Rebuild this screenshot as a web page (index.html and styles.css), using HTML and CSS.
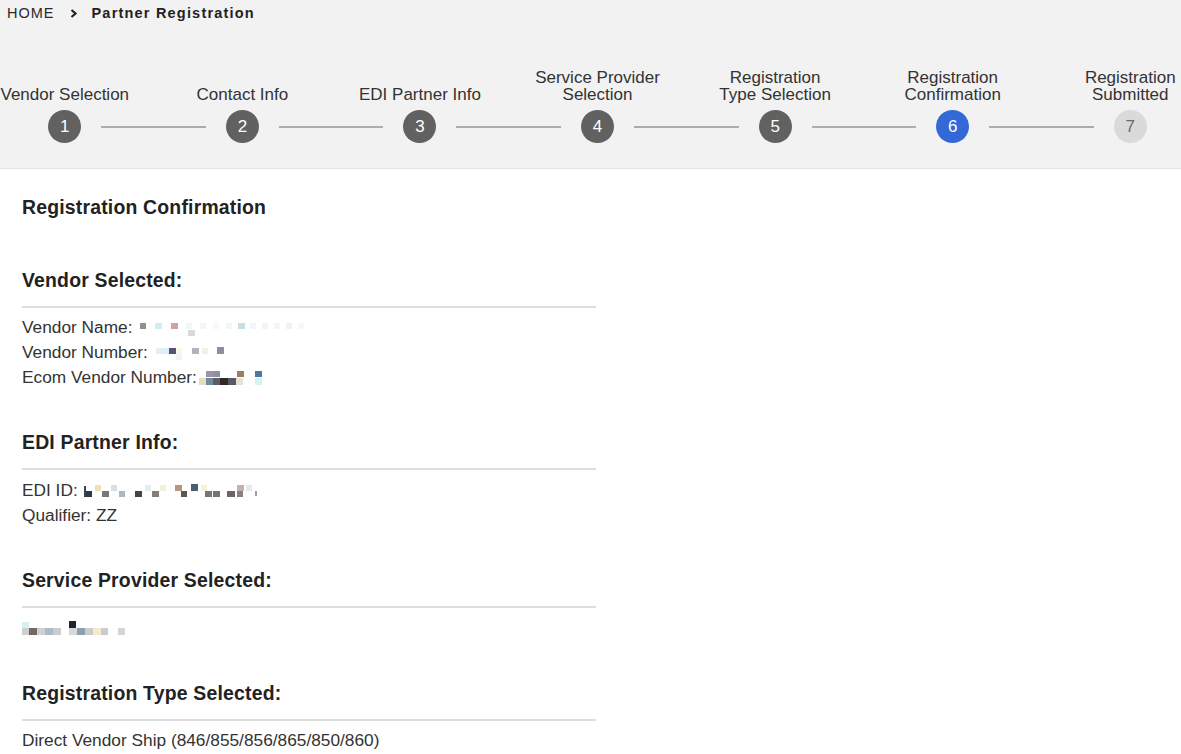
FILE: index.html
```html
<!DOCTYPE html>
<html lang="en">
<head>
<meta charset="utf-8">
<title>Partner Registration</title>
<link rel="stylesheet" href="styles.css">
</head>
<body>
<header class="top-band">
  <nav class="breadcrumb">
    <span class="crumb">HOME</span>
    <svg class="crumb-sep" width="8" height="9" viewBox="0 0 8 9"><polyline points="1.5,1 5.5,4.5 1.5,8" fill="none" stroke="#222" stroke-width="2.2"/></svg>
    <span class="crumb current">Partner Registration</span>
  </nav>
  <ol class="stepper">
    <li class="step done first">
      <span class="step-label">Vendor Selection</span>
      <span class="step-track"><span class="line"></span><span class="dot">1</span><span class="line"></span></span>
    </li>
    <li class="step done">
      <span class="step-label">Contact Info</span>
      <span class="step-track"><span class="line"></span><span class="dot">2</span><span class="line"></span></span>
    </li>
    <li class="step done">
      <span class="step-label">EDI Partner Info</span>
      <span class="step-track"><span class="line"></span><span class="dot">3</span><span class="line"></span></span>
    </li>
    <li class="step done">
      <span class="step-label">Service Provider<br>Selection</span>
      <span class="step-track"><span class="line"></span><span class="dot">4</span><span class="line"></span></span>
    </li>
    <li class="step done">
      <span class="step-label">Registration<br>Type Selection</span>
      <span class="step-track"><span class="line"></span><span class="dot">5</span><span class="line"></span></span>
    </li>
    <li class="step active">
      <span class="step-label">Registration<br>Confirmation</span>
      <span class="step-track"><span class="line"></span><span class="dot">6</span><span class="line"></span></span>
    </li>
    <li class="step todo last">
      <span class="step-label">Registration<br>Submitted</span>
      <span class="step-track"><span class="line"></span><span class="dot">7</span><span class="line"></span></span>
    </li>
  </ol>
</header>

<main class="content">
  <h2 class="page-title">Registration Confirmation</h2>

  <section class="section">
    <h3 class="section-title">Vendor Selected:</h3>
    <div class="section-body">
      <div class="row">Vendor Name: <svg class="redact" width="168" height="16" viewBox="0 0 168 16">
        <rect x="0" y="3" width="6" height="6" fill="#8f8f8f"/>
        <rect x="15" y="3" width="7" height="6" fill="#d3eef3"/>
        <rect x="31" y="3" width="7" height="6" fill="#cfa3a3"/>
        <rect x="46" y="3" width="6" height="6" fill="#eef6f8"/>
        <rect x="48" y="10" width="7" height="6" fill="#d9d9d9"/>
        <rect x="60" y="3" width="6" height="6" fill="#f2f6f8"/>
        <rect x="73" y="3" width="6" height="6" fill="#f4f8fa"/>
        <rect x="86" y="3" width="6" height="6" fill="#f1f5f7"/>
        <rect x="98" y="3" width="7" height="6" fill="#c6dfe2"/>
        <rect x="110" y="3" width="6" height="6" fill="#f0f6f8"/>
        <rect x="122" y="3" width="6" height="6" fill="#eef5f8"/>
        <rect x="134" y="3" width="6" height="6" fill="#f3f7f9"/>
        <rect x="146" y="3" width="6" height="6" fill="#eef4f6"/>
        <rect x="158" y="3" width="6" height="6" fill="#f5f8f9"/>
      </svg></div>
      <div class="row">Vendor Number: <svg class="redact" width="76" height="16" viewBox="0 0 76 16">
        <rect x="0" y="3" width="6" height="6" fill="#e6eef2"/>
        <rect x="6" y="3" width="7" height="6" fill="#d7f1f6"/>
        <rect x="13" y="3" width="7" height="6" fill="#5b5272"/>
        <rect x="20" y="3" width="6" height="6" fill="#fbf7e2"/>
        <rect x="20" y="9" width="6" height="6" fill="#eaf6f8"/>
        <rect x="36" y="3" width="7" height="6" fill="#b6b1bc"/>
        <rect x="46" y="3" width="6" height="6" fill="#f3f0e6"/>
        <rect x="61" y="2" width="7" height="7" fill="#8a90a0"/>
      </svg></div>
      <div class="row">Ecom Vendor Number:<svg class="redact tight" width="70" height="16" viewBox="0 0 70 16">
        <rect x="9" y="1" width="7" height="6" fill="#9c95a4"/>
        <rect x="16" y="1" width="7" height="6" fill="#8d90a0"/>
        <rect x="40" y="1" width="7" height="6" fill="#9c7f62"/>
        <rect x="58" y="1" width="7" height="6" fill="#4a78a2"/>
        <rect x="2" y="8" width="7" height="7" fill="#e9dcc0"/>
        <rect x="9" y="8" width="7" height="7" fill="#6f8a9d"/>
        <rect x="16" y="8" width="7" height="7" fill="#5c5c66"/>
        <rect x="23" y="8" width="8" height="7" fill="#2f2a28"/>
        <rect x="31" y="8" width="8" height="7" fill="#555a66"/>
        <rect x="39" y="8" width="7" height="7" fill="#e5e3cf"/>
        <rect x="58" y="8" width="7" height="7" fill="#d8f3f8"/>
      </svg></div>
    </div>
  </section>

  <section class="section">
    <h3 class="section-title">EDI Partner Info:</h3>
    <div class="section-body">
      <div class="row">EDI ID: <svg class="redact tight" width="184" height="16" viewBox="0 0 184 16">
        <rect x="1" y="4" width="2" height="11" fill="#3a4450"/>
        <rect x="3" y="9" width="6" height="6" fill="#2d3a48"/>
        <rect x="12" y="3" width="6" height="6" fill="#efe1b5"/>
        <rect x="19" y="9" width="7" height="6" fill="#777777"/>
        <rect x="28" y="3" width="6" height="6" fill="#dcdfe0"/>
        <rect x="36" y="9" width="6" height="6" fill="#a9b8c4"/>
        <rect x="52" y="9" width="7" height="6" fill="#4b3f48"/>
        <rect x="62" y="3" width="6" height="6" fill="#e3f0f0"/>
        <rect x="69" y="9" width="7" height="6" fill="#858075"/>
        <rect x="77" y="3" width="6" height="6" fill="#f0f0df"/>
        <rect x="92" y="3" width="7" height="6" fill="#b99680"/>
        <rect x="98" y="9" width="6" height="6" fill="#58584e"/>
        <rect x="108" y="2" width="7" height="7" fill="#4a6072"/>
        <rect x="118" y="3" width="6" height="6" fill="#f8f3d8"/>
        <rect x="122" y="9" width="7" height="6" fill="#777777"/>
        <rect x="130" y="9" width="7" height="6" fill="#7a7470"/>
        <rect x="144" y="9" width="8" height="6" fill="#6e6464"/>
        <rect x="154" y="3" width="7" height="6" fill="#c2b2aa"/>
        <rect x="154" y="9" width="6" height="6" fill="#8a8080"/>
        <rect x="163" y="3" width="6" height="6" fill="#e6eaec"/>
        <rect x="172" y="9" width="2" height="5" fill="#9aa0a8"/>
      </svg></div>
      <div class="row">Qualifier: ZZ</div>
    </div>
  </section>

  <section class="section">
    <h3 class="section-title">Service Provider Selected:</h3>
    <div class="section-body">
      <div class="row"><svg class="redact lead" width="106" height="16" viewBox="0 0 106 16">
        <rect x="0" y="2" width="7" height="6" fill="#d8eef5"/>
        <rect x="0" y="8" width="7" height="7" fill="#cfcfcf"/>
        <rect x="7" y="8" width="8" height="7" fill="#6e6a66"/>
        <rect x="15" y="8" width="8" height="7" fill="#d0d0d0"/>
        <rect x="23" y="8" width="8" height="7" fill="#a8bccc"/>
        <rect x="31" y="8" width="8" height="7" fill="#cccccc"/>
        <rect x="47" y="1" width="7" height="7" fill="#1c2530"/>
        <rect x="47" y="8" width="8" height="7" fill="#d8d8d8"/>
        <rect x="55" y="8" width="8" height="7" fill="#8ca0b0"/>
        <rect x="63" y="8" width="8" height="7" fill="#cccccc"/>
        <rect x="71" y="8" width="8" height="7" fill="#f3eccb"/>
        <rect x="79" y="8" width="7" height="7" fill="#cccccc"/>
        <rect x="96" y="8" width="7" height="7" fill="#d5d5d5"/>
      </svg></div>
    </div>
  </section>

  <section class="section">
    <h3 class="section-title">Registration Type Selected:</h3>
    <div class="section-body">
      <div class="row">Direct Vendor Ship (846/855/856/865/850/860)</div>
    </div>
  </section>
</main>
</body>
</html>
```

FILE: styles.css
```css
* {
  box-sizing: border-box;
}

html, body {
  margin: 0;
  padding: 0;
  background: #ffffff;
}

body {
  font-family: "Liberation Sans", Arial, sans-serif;
  color: #333333;
  overflow: hidden;
  width: 1181px;
  height: 754px;
}

.top-band {
  background: #f2f2f2;
  height: 169px;
  border-bottom: 1px solid #e4e4e4;
  overflow: hidden;
}

.breadcrumb {
  display: flex;
  align-items: center;
  padding: 4px 7px 0;
  height: 22px;
  font-size: 14.5px;
  line-height: 18px;
  letter-spacing: 1px;
  color: #2a2a2a;
}

.crumb-sep {
  display: block;
  margin: 0 14px 0 15px;
}

.crumb.current {
  font-weight: bold;
  letter-spacing: 1.2px;
  color: #222222;
}

.stepper {
  list-style: none;
  margin: 47px 0 0 -24px;
  padding: 0;
  display: flex;
  width: 1243px;
}

.step {
  flex: 1 1 0;
  display: flex;
  flex-direction: column;
  align-items: stretch;
}

.step-label {
  height: 34px;
  display: flex;
  align-items: flex-end;
  justify-content: center;
  text-align: center;
  font-size: 17px;
  line-height: 17px;
  color: #333333;
}

.step-track {
  display: flex;
  align-items: center;
  margin-top: 7px;
}

.line {
  flex: 1 1 0;
  height: 2px;
  background: #abafaa;
}

.line:first-child {
  margin-right: 20px;
}

.line:last-child {
  margin-left: 20px;
}

.first .line:first-child,
.last .line:last-child {
  visibility: hidden;
}

.dot {
  width: 33px;
  height: 33px;
  border-radius: 50%;
  display: flex;
  align-items: center;
  justify-content: center;
  font-size: 17px;
  color: #ffffff;
  background: #616161;
  flex: none;
}

.active .dot {
  background: #3369d6;
}

.todo .dot {
  background: #dadada;
  color: #6b6b6b;
}

.content {
  padding: 26.5px 22px 0;
}

.page-title {
  margin: 0 0 50px;
  font-size: 19.4px;
  line-height: 23px;
  font-weight: bold;
  color: #222222;
  letter-spacing: 0.2px;
}

.section {
  width: 574px;
  margin-bottom: 41.3px;
}

.section:last-child {
  margin-bottom: 0;
}

.section-title {
  margin: 0 0 7.5px;
  padding-bottom: 14px;
  border-bottom: 2px solid #dedede;
  font-size: 19.4px;
  line-height: 23px;
  font-weight: bold;
  color: #222222;
  letter-spacing: 0.2px;
}

.section-body {
  font-size: 17.3px;
  line-height: 25px;
  color: #333333;
}

.row {
  display: flex;
  align-items: center;
  white-space: pre;
  height: 25px;
}

.redact {
  display: block;
  margin-left: 3px;
}

.redact.tight {
  margin-left: 0;
}

.redact.lead {
  margin-left: 0;
}
```
